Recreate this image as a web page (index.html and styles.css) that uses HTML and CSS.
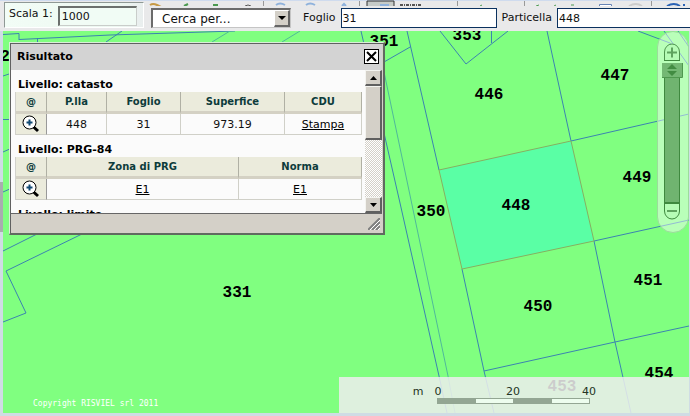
FILE: index.html
```html
<!DOCTYPE html>
<html lang="it">
<head>
<meta charset="utf-8">
<title>Catasto</title>
<link rel="stylesheet" href="styles.css">
</head>
<body>
<header class="toolbar">
  <svg class="tool-icons" width="690" height="9" viewBox="0 0 690 9" fill="none" aria-hidden="true">
    <path d="M150 5q3-2 7 0l4 2" stroke="#c79a45" stroke-width="2"/>
    <path d="M184 6l4-2M213 5h5" stroke="#4c9a50" stroke-width="2"/>
    <path d="M245 6q3-2 6 0" stroke="#555"/>
    <path d="M276 5q4-3 9 0M306 5q4-3 9 0M342 6l2-2 2 2M382 5q5-2 9 0" stroke="#8fb2dc" stroke-width="2"/>
    <path d="M263.500 1v8M359.500 1v8M457.500 1v8M524.500 1v8M651.500 1v8" stroke="#999"/>
    <path d="M367 9V1h27v8" fill="#c6cbc8" stroke="#333"/>
    <path d="M380 5h9" stroke="#8fb2dc" stroke-width="2"/>
    <path d="M400 5h22" stroke="#555" stroke-width="2" stroke-dasharray="3 1 1 1"/>
    <path d="M480 6l2-1M536 6l3-1M554 6l2-1M571 5h3" stroke="#4c9a50"/>
    <path d="M599.500 8V4.500h12V8" fill="#fff" stroke="#6683b4"/>
    <path d="M629 6q7-4 13 0" stroke="#ccc" stroke-width="2"/>
    <path d="M667 6q7-4 13 0M684 4v3" stroke="#2a62b5" stroke-width="2"/>
  </svg>
  <div class="scale-box">
    <label for="scala">Scala 1:</label>
    <input id="scala" class="sunken" value="1000">
  </div>
  <div class="search">
    <div class="select-wrap">
      <select aria-label="Cerca"><option>Cerca per...</option></select>
      <span class="drop"><svg width="8" height="4" viewBox="0 0 8 4"><path d="M0 0h8L4 4z"/></svg></span>
    </div>
    <label for="foglio">Foglio</label>
    <input id="foglio" class="field" value="31">
    <label for="particella">Particella</label>
    <input id="particella" class="field" value="448">
  </div>
</header>
<main class="map">
  <svg class="parcels" viewBox="3 31 686 382" preserveAspectRatio="xMinYMin slice">
    <path class="selected" d="M439 170L571 141L594 241L462 269Z"/>
    <g class="lines">
      <path d="M3 34.500L19 33.500V40M19 39.500L110 35L235 31M37.500 38V44M106 42L122 31M3 76L12 73M3 119.500h9M3 152L12 148M3 192L12 188"/>
      <path d="M361 31L364 44M384 62L411 46.500M407 31L439 170M462 269L484 371L494 413"/>
      <path d="M384 133L400 203L439 376L447 413"/>
      <path d="M440 31L466 64L508 31M491.500 31V43"/>
      <path d="M547 31L571 141L689 114M594 241L689 220M594 241L615 342L631 413M484 371L615 342L689 326M638 31L670 43M670 43L675 49M664 31L689 66M678 31L689 47"/>
      <path d="M3 251L37 234M82 234L6 271L26 313L3 322"/>
    </g>
    <path class="faint" d="M384 72L411 200L448 376L455 413M212 42L230 31M282 42L300 31"/>
    <path class="outline" d="M439 170L571 141L594 241L462 269Z"/>
    <g class="labels">
      <text x="5" y="61">2</text>
      <text x="384" y="46">351</text>
      <text x="467" y="40">353</text>
      <text x="489" y="99">446</text>
      <text x="615" y="80">447</text>
      <text x="516" y="210">448</text>
      <text x="637" y="182">449</text>
      <text x="431" y="216">350</text>
      <text x="538" y="311">450</text>
      <text x="648" y="285">451</text>
      <text x="659" y="378">454</text>
      <text x="562" y="391">453</text>
      <text x="237" y="297">331</text>
    </g>
    <text class="copyright" x="33" y="406">Copyright RISVIEL srl 2011</text>
  </svg>

  <section class="dialog" aria-labelledby="titolo">
    <div class="title-bar">
      <h1 id="titolo">Risultato</h1>
      <button class="close" aria-label="Chiudi"><svg width="11" height="11" viewBox="0 0 11 11"><path d="M1 1L10 10M10 1L1 10" stroke="#000" stroke-width="2"/></svg></button>
    </div>
    <div class="viewport">
      <div class="results">
        <h2>Livello: catasto</h2>
        <table>
          <colgroup><col class="c-zoom"><col class="c-plla"><col class="c-foglio"><col class="c-sup"><col></colgroup>
          <thead><tr><th>@</th><th>P.lla</th><th>Foglio</th><th>Superfice</th><th>CDU</th></tr></thead>
          <tbody><tr>
            <td class="zoom"><button aria-label="Zoom"><svg width="18" height="18" viewBox="0 0 18 18" fill="none"><path d="M11 11.500L16 16" stroke="#000" stroke-width="3"/><circle cx="7.500" cy="7.500" r="6.500" fill="#fff" stroke="#000"/><path d="M7.500 4.500v6M4.500 7.500h6" stroke="#124a74" stroke-width="2"/></svg></button></td>
            <td>448</td><td>31</td><td>973.19</td><td><a href="#stampa">Stampa</a></td>
          </tr></tbody>
        </table>
        <h2>Livello: PRG-84</h2>
        <table>
          <colgroup><col class="c-zoom"><col class="c-zona"><col></colgroup>
          <thead><tr><th>@</th><th>Zona di PRG</th><th>Norma</th></tr></thead>
          <tbody><tr>
            <td class="zoom"><button aria-label="Zoom"><svg width="18" height="18" viewBox="0 0 18 18" fill="none"><path d="M11 11.500L16 16" stroke="#000" stroke-width="3"/><circle cx="7.500" cy="7.500" r="6.500" fill="#fff" stroke="#000"/><path d="M7.500 4.500v6M4.500 7.500h6" stroke="#124a74" stroke-width="2"/></svg></button></td>
            <td><a href="#zona">E1</a></td><td><a href="#norma">E1</a></td>
          </tr></tbody>
        </table>
        <h2>Livello: limite</h2>
      </div>
      <div class="scrollbar">
        <button class="raised" aria-label="Su"><svg width="7" height="4" viewBox="0 0 7 4"><path d="M0 4h7L3.500 0z"/></svg></button>
        <div class="thumb raised"></div>
        <button class="raised down" aria-label="Giù"><svg width="7" height="4" viewBox="0 0 7 4"><path d="M0 0h7L3.500 4z"/></svg></button>
      </div>
    </div>
    <div class="status-bar">
      <svg width="12" height="12" viewBox="0 0 12 12"><path d="M0 12L12 0M4 12L12 4M8 12L12 8" stroke="#808080" stroke-width="2"/><path d="M2 12L12 2M6 12L12 6M10 12L12 10" stroke="#fff"/></svg>
    </div>
  </section>

  <div class="zoom-bar">
    <svg width="30" height="200" viewBox="0 0 30 200" fill="none">
      <path d="M6.500 28.500V20a7.500 8 0 0 1 15 0V28.500Z" stroke="#4e944e" fill="#b6fcb6"/>
      <path d="M6 28.500h16" stroke="#3f893f"/>
      <path d="M9 20.500h10M14 15.500v10" stroke="#5fa35f" stroke-width="2"/>
      <rect x="6.500" y="40.500" width="15" height="130" fill="#70b470" stroke="#3f893f"/>
      <rect x="4" y="31" width="21" height="14" fill="#74b874"/>
      <path d="M4 45.500h20.500V31" stroke="#4f984f"/>
      <path d="M9 37L14 32L19 37ZM9 39L14 44L19 39Z" fill="#428c42"/>
      <path d="M6.500 171.500V179a7.500 8 0 0 0 15 0V171.500Z" stroke="#3f893f" fill="#b6fcb6"/>
      <path d="M6 171h16" stroke="#3f893f" stroke-width="2"/>
      <path d="M9 179h10" stroke="#5fa35f" stroke-width="2"/>
    </svg>
  </div>

  <div class="scale-panel">
    <svg width="200" height="30" viewBox="0 0 200 30">
      <g class="ticks"><text x="13" y="15">m</text><text x="33" y="15">0</text><text x="108" y="15">20</text><text x="184" y="15">40</text></g>
      <rect x="32.500" y="18.500" width="152" height="5" fill="#edfdee" stroke="#93a693"/>
      <path d="M32 18h39v6h-39zM108 18h39v6h-39z" fill="#93a693"/>
    </svg>
  </div>
</main>
</body>
</html>
```
FILE: styles.css
```css
* { box-sizing: border-box; }

body {
  margin: 0;
  height: 100vh;
  overflow: hidden;
  display: flex;
  flex-direction: column;
  background: linear-gradient(#a9adaf, #a9adaf) 0 182px / 3px 50px no-repeat, #cfdce4;
  font: 11px/14px "DejaVu Sans", sans-serif;
  color: #111;
}

button { padding: 0; font: inherit; }

input, select { font: inherit; color: #111; border-radius: 0; outline: 0; }

.toolbar {
  position: relative;
  flex: none;
  height: 31px;
  display: flex;
  gap: 7px;
  padding: 2px 0 3px 4px;
  background: linear-gradient(#cfdbee 0 1px, #e9e9ea 1px);
  overflow: hidden;
}

.tool-icons { position: absolute; left: 0; top: 0; }

.scale-box {
  position: relative;
  flex: none;
  width: 140px;
  display: flex;
  gap: 5px;
  padding: 3px 4px 1px;
  border: 1px solid #8f9995;
  border-right-color: #fff;
  border-bottom-color: #fff;
  background: linear-gradient(90deg, #f2fdf6, #edf8f1 80%, #e9eeee);
}

.scale-box label { padding-top: 1px; }

.sunken {
  width: 79px;
  height: 20px;
  padding: 0 2px;
  border: 2px solid #6b706d;
  border-right: 1px solid #c9cdca;
  border-bottom: 1px solid #c9cdca;
  background: #f1fcf5;
}

.search {
  position: relative;
  flex: 1;
  min-width: 0;
  display: flex;
  align-items: center;
  gap: 5px;
  margin: 4px 0 -3px;
  padding: 0 0 1px;
  background: #e9e9ea;
}

.select-wrap { position: relative; flex: none; width: 140px; height: 20px; margin-right: 7px; }

.select-wrap select {
  appearance: none;
  width: 100%;
  height: 100%;
  padding: 0 20px 0 9px;
  border: 2px solid #6b6b6b;
  border-right: 1px solid #c5c5c5;
  border-bottom: 1px solid #c5c5c5;
  background: #fff;
  font-size: 12px;
}

.drop {
  position: absolute;
  right: 1px;
  top: 2px;
  width: 16px;
  height: 17px;
  display: grid;
  place-items: center;
  background: #d4d0c8;
  border: 1px solid #fff;
  border-right: 2px solid #666;
  border-bottom: 2px solid #666;
  pointer-events: none;
}

.field {
  flex: none;
  width: 156px;
  height: 20px;
  padding: 0 1px;
  border: 1px solid #0b315f;
  background: #fff;
}

.map {
  position: relative;
  flex: 1;
  min-height: 0;
  margin: 0 1px 3px 3px;
  background: #80ff80;
  overflow: hidden;
}

.parcels { display: block; width: 100%; height: 100%; }
.lines { fill: none; stroke: #3b84b0; }
.faint { fill: none; stroke: #4fb99a; }
.selected { fill: #5affa5; }
.outline { fill: none; stroke: #86b060; }
.labels { font: bold 16px "Liberation Mono", monospace; text-anchor: middle; fill: #000; }
.copyright { font: 8px "DejaVu Sans Mono", monospace; fill: #fff; }

.dialog {
  position: absolute;
  left: 6px;
  top: 11px;
  width: 376px;
  padding: 1px;
  border: 1px solid #d8efd8;
  border-right: 2px solid #606a60;
  border-bottom: 2px solid #606a60;
  background: #d4d0c8;
  box-shadow: inset 1px 1px #606060;
}

.title-bar {
  display: flex;
  justify-content: space-between;
  align-items: center;
  height: 26px;
  padding: 0 3px 1px 6px;
  background: #d3d3d3;
}

h1, h2 { margin: 0; font: bold 11px/14px "DejaVu Sans", sans-serif; color: #000; }

.close {
  width: 15px;
  height: 15px;
  display: grid;
  place-items: center;
  background: #fff;
  border: 1px solid #000;
}

.viewport {
  display: flex;
  height: 144px;
  overflow: hidden;
  background: #fbfbfb;
  border-bottom: 1px solid #666;
}

.results { flex: 1; padding: 8px 3px 0 4px; }
.results h2 { padding-left: 3px; }
.results table + h2 { margin-top: 8px; }

table {
  width: 100%;
  table-layout: fixed;
  border-collapse: separate;
  border-spacing: 0;
  border-left: 1px solid #d2d2cc;
  text-align: center;
}

.c-zoom { width: 31px; }
.c-plla { width: 60px; }
.c-foglio { width: 74px; }
.c-sup { width: 104px; }
.c-zona { width: 192px; }

th {
  height: 22px;
  padding: 0;
  font-size: 10px;
  color: #0d3b3b;
  background: #ebebdc;
  border-right: 1px solid #b0b0a4;
  border-bottom: 3px solid #d4d1c4;
}

td {
  height: 21px;
  padding: 2px 0 0;
  border-right: 1px solid #d0d0c8;
  border-bottom: 1px solid #d0d0c8;
}

.zoom { padding: 0; background: #ebebdc; border-right-color: #999; }
.zoom button { display: block; margin: auto; width: 18px; height: 18px; border: 0; background: none; }
.zoom svg { display: block; }
a { color: #000; }

.scrollbar {
  flex: none;
  width: 17px;
  display: flex;
  flex-direction: column;
  background: repeating-conic-gradient(#fff 0 25%, #d4d0c8 0 50%) 0 0 / 2px 2px;
}

.raised {
  background: #d4d0c8;
  border: 1px solid #f4f4f0;
  border-right: 2px solid #606060;
  border-bottom: 2px solid #606060;
}

.scrollbar button { height: 16px; display: grid; place-items: center; }
.thumb { height: 54px; }
.down { margin-top: auto; }

.status-bar {
  height: 18px;
  display: flex;
  justify-content: flex-end;
  align-items: flex-end;
  padding: 2px;
}

.zoom-bar {
  position: absolute;
  right: 0;
  top: 0;
  width: 32px;
  height: 202px;
  border: 1px solid #9cdc9c;
  border-radius: 16px;
  background: rgba(255, 255, 255, .45);
}

.zoom-bar svg { display: block; }

.scale-panel {
  position: absolute;
  right: 0;
  bottom: 0;
  width: 51%;
  height: 36px;
  padding: 3px 66px;
  background: rgba(238, 238, 238, .86);
}

.scale-panel svg { display: block; }
.ticks { font: 11px "DejaVu Sans", sans-serif; text-anchor: middle; fill: #233323; }
```
